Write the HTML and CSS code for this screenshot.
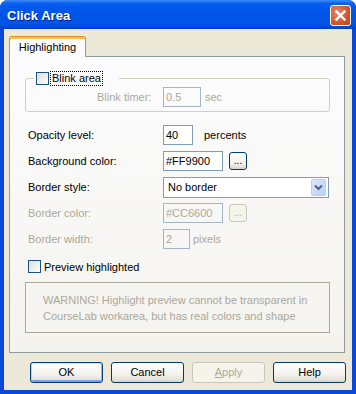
FILE: index.html
```html
<!DOCTYPE html>
<html lang="en">
	<head>
		<meta charset="UTF-8" />
		<title>Click Area</title>
		<link rel="stylesheet" href="styles.css">
	</head>
	<body>
		<div class="window">
			<div class="titlebar">
				<span class="title">Click Area</span>
				<span class="close">
					<svg width="11" height="11" viewBox="0 0 11 11">
						<path d="M1.5 1.5 L9.5 9.5 M9.5 1.5 L1.5 9.5" stroke="#fff" stroke-width="2.4" stroke-linecap="square" />
					</svg>
				</span>
			</div>

			<div class="frame">
				<div class="tabs">
					<div class="tab">Highlighting</div>
				</div>

				<div class="panel">
					<!-- Blink group -->
					<fieldset class="group">
						<legend>
							<span class="check"></span>
							<span class="focus">Blink area</span>
						</legend>
						<div class="timer-row">
							<span class="timer-label disabled">Blink timer:</span>
							<span class="input disabled w38">0.5</span>
							<span class="unit u-sec disabled">sec</span>
						</div>
					</fieldset>

					<div class="form">
						<span class="label">Opacity level:</span>
						<div class="field">
							<span class="input w30">40</span>
							<span class="unit u-percents">percents</span>
						</div>

						<span class="label">Background color:</span>
						<div class="field">
							<span class="input w60">#FF9900</span>
							<span class="dots">...</span>
						</div>

						<span class="label">Border style:</span>
						<div class="field">
							<div class="select">
								<span class="select-text">No border</span>
								<span class="select-arrow">
									<svg width="9" height="7" viewBox="0 0 9 7">
										<path d="M1 1.5 L4.5 5 L8 1.5" fill="none" stroke="#4D6185" stroke-width="2" />
									</svg>
								</span>
							</div>
						</div>

						<span class="label disabled">Border color:</span>
						<div class="field">
							<span class="input disabled w60">#CC6600</span>
							<span class="dots off">...</span>
						</div>

						<span class="label disabled">Border width:</span>
						<div class="field">
							<span class="input disabled w27">2</span>
							<span class="unit u-pixels disabled">pixels</span>
						</div>
					</div>

					<div class="check-row">
						<span class="check"></span>
						<span>Preview highlighted</span>
					</div>

					<div class="warning">
						WARNING! Highlight preview cannot be transparent in<br>
						CourseLab workarea, but has real colors and shape
					</div>
				</div>

				<div class="buttons">
					<span class="btn default">OK</span>
					<span class="btn">Cancel</span>
					<span class="btn off"><u>A</u>pply</span>
					<span class="btn">Help</span>
				</div>
			</div>
		</div>
	</body>
</html>
```

FILE: styles.css
```css
* {
	box-sizing: border-box;
}

body {
	margin: 0;
	font: 11px "Liberation Sans", Arial, sans-serif;
	color: #000;
	background: #fff;
}

.window {
	width: 356px;
	height: 394px;
	display: flex;
	flex-direction: column;
	border-radius: 8px 8px 0 0;
	overflow: hidden;
	background: #0842d6;
}

.titlebar {
	height: 29px;
	flex: none;
	display: flex;
	align-items: center;
	justify-content: space-between;
	padding: 0 5px 0 7px;
	background: linear-gradient(#3d8ef8 0, #0f63ef 3px, #0058ee 6px, #0054e3 55%, #0056ea 80%, #004ada 92%, #003ec8 100%);
	color: #fff;
}

.title {
	font: bold 13px "Liberation Sans", Arial, sans-serif;
	text-shadow: 1px 1px #0a1f8a;
	margin-top: 1px;
}

.close {
	width: 21px;
	height: 21px;
	margin-top: 2px;
	display: flex;
	align-items: center;
	justify-content: center;
	border: 1px solid #fff;
	border-radius: 3px;
	background: radial-gradient(circle at 35% 35%, #e9866a, #d2552f 60%, #c33e1b);
}

.frame {
	flex: 1;
	display: flex;
	flex-direction: column;
	background: #ece9d8;
	border: 4px solid #0a47db;
	border-top: 0;
	padding: 7px 6px 7px 5px;
}

.tabs {
	display: flex;
}

.tab {
	position: relative; /* sits over the panel's top edge */
	width: 77px;
	height: 21px;
	margin-bottom: -1px;
	border: 1px solid #919b9c;
	border-top-color: #e68b2c;
	border-bottom: 0;
	border-radius: 3px 3px 0 0;
	box-shadow: inset 0 2px #ffc73c;
	background: #fcfcfe;
	text-align: center;
	line-height: 20px;
}

.panel {
	width: 336px;
	height: 297px;
	border: 1px solid #919b9c;
	background: linear-gradient(#fcfcfe, #f4f3ee);
	padding: 15px 0 0 15px;
}

.disabled {
	color: #aca899;
}

/* group box */
.group {
	width: 305px;
	margin: 0;
	border: 1px solid #d0d0bf;
	border-radius: 3px;
	padding: 2px 0 4px 8px;
}

.group legend {
	display: flex;
	align-items: center;
	height: 13px;
	padding: 0 17px 0 2px;
}

.check {
	width: 13px;
	height: 13px;
	flex: none;
	border: 1px solid #1c5180;
	background: linear-gradient(135deg, #dcdcd7, #fff);
}

.focus {
	margin-left: 2px;
	padding: 0 1px;
	line-height: 13px;
	outline: 1px dotted #000;
}

.timer-row {
	display: flex;
	align-items: center;
	padding-left: 63px;
}

.timer-label {
	width: 66px;
}

/* form grid */
.form {
	display: grid;
	grid-template-columns: 135px auto;
	grid-auto-rows: 20px;
	row-gap: 6px;
	margin: 13px 0 0 3px;
}

.label {
	display: flex;
	align-items: center;
}

.field {
	display: flex;
	align-items: center;
}

.input {
	height: 20px;
	border: 1px solid #7f9db9;
	background: #fff;
	padding-left: 2px;
	line-height: 18px;
	white-space: nowrap;
}

.input.disabled {
	background: transparent;
	border-color: #a5b5c9;
}

.w27 { width: 27px; }
.w30 { width: 30px; }
.w38 { width: 38px; }
.w60 { width: 60px; }

.u-sec { margin-left: 4px; }
.u-percents { margin-left: 11px; }
.u-pixels { margin-left: 3px; }

.dots {
	width: 18px;
	height: 18px;
	margin-left: 6px;
	border: 1px solid #003c74;
	border-radius: 3px;
	background: linear-gradient(#fff, #f1f0ea 70%, #d8d3c9);
	text-align: center;
	line-height: 16px;
	font-size: 10px;
}

.dots.off {
	border-color: #c9c7ba;
	background: #f5f4ea;
	color: #aca899;
}

.select {
	width: 166px;
	height: 21px;
	display: flex;
	align-items: center;
	padding: 1px 2px 1px 1px;
	border: 1px solid #7f9db9;
	background: #fff;
}

.select-text {
	flex: 1;
	padding-left: 3px;
}

.select-arrow {
	width: 15px;
	height: 17px;
	display: flex;
	align-items: center;
	justify-content: center;
	border: 1px solid #b9cdf7;
	border-radius: 2px;
	background: linear-gradient(135deg, #dde7fd, #bccffa);
}

.check-row {
	display: flex;
	align-items: center;
	gap: 3px;
	margin: 11px 0 0 3px;
	height: 13px;
}

.warning {
	width: 305px;
	height: 51px;
	margin-top: 9px;
	border: 1px solid #aca899;
	padding: 9px 0 0 17px;
	line-height: 16px;
	color: #aca899;
}

/* dialog buttons */
.buttons {
	display: flex;
	justify-content: flex-end;
	gap: 8px;
	margin-top: 9px;
}

.btn {
	width: 73px;
	height: 21px;
	border: 1px solid #003c74;
	border-radius: 3px;
	background: linear-gradient(#fff, #f3f2ec 60%, #e3e0d6 90%, #d6d0c5);
	text-align: center;
	line-height: 19px;
}

.btn.default {
	box-shadow: inset 0 1px #cee7ff, inset 1px 0 #b8d0f8, inset -1px 0 #9bb7f2, inset 0 -2px #7ea0ee;
}

.btn.off {
	border-color: #c9c7ba;
	background: #f5f4ea;
	color: #aca899;
}
```
